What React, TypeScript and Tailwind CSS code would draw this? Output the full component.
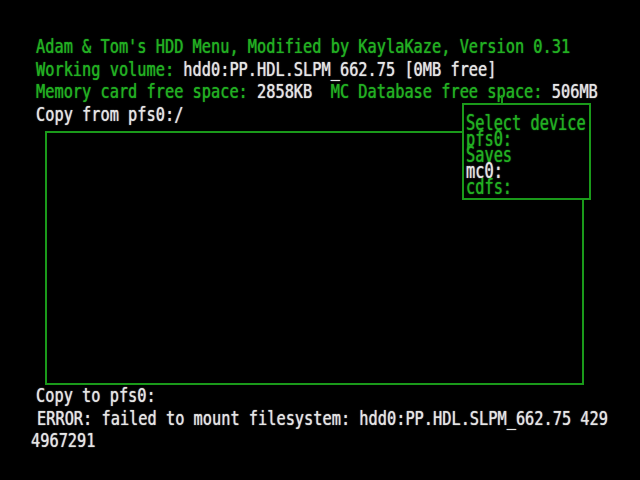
import React from "react";

const G = "text-[#22b022] [text-shadow:0_0_1px_#22b022]";
const W = "text-[#e6e6e6] [text-shadow:0_0_1px_#cfcfcf]";

function Line({ children, className = "" }: { children: React.ReactNode; className?: string }) {
  return (
    <div className={`h-[22.5px] leading-[22.5px] whitespace-pre ${className}`}>
      <span className="inline-block scale-y-[1.25] origin-center">{children}</span>
    </div>
  );
}

function MenuLine({ children, className = "" }: { children: React.ReactNode; className?: string }) {
  return (
    <div className={`h-[16px] leading-[16px] whitespace-pre ${className}`}>
      <span className="inline-block scale-y-[1.4] origin-center">{children}</span>
    </div>
  );
}

export default function App() {
  return (
    <div
      className="relative w-[640px] h-[480px] bg-black overflow-hidden text-[15.3px] [font-family:'DejaVu_Sans_Mono',monospace]"
    >
      <div className="pt-[36px] pl-[36px]">
        <Line className={G}>Adam &amp; Tom's HDD Menu, Modified by KaylaKaze, Version 0.31</Line>
        <Line>
          <span className={G}>Working volume: </span>
          <span className={W}>hdd0:PP.HDL.SLPM_662.75 [0MB free]</span>
        </Line>
        <Line>
          <span className={G}>Memory card free space: </span>
          <span className={W}>2858KB</span>
          <span className={G}>  MC Database free space: </span>
          <span className={W}>506MB</span>
        </Line>
        <Line className={W}>Copy from pfs0:/</Line>
      </div>

      <div className="mt-[5px] ml-[45px] w-[539px] h-[254px] border-2 border-[#1a9a1a]" />

      <div className="pl-[36px]">
        <Line className={W}>Copy to pfs0:</Line>
        <Line className={`${W} ml-[1px]`}>ERROR: failed to mount filesystem: hdd0:PP.HDL.SLPM_662.75 429</Line>
        <Line className={`${W} -ml-[5px]`}>4967291</Line>
      </div>

      {/* small tick above the device menu */}
      <div className="absolute left-[501px] top-[95px] w-[2px] h-[9px] bg-[#1a9a1a]" />

      {/* Select device popup */}
      <div className="absolute left-[462px] top-[103px] w-[129px] h-[97px] bg-black border-2 border-[#1a9a1a] pt-[10px] pl-[2px]">
        <MenuLine className={G}>Select device</MenuLine>
        <MenuLine className={G}>pfs0:</MenuLine>
        <MenuLine className={G}>Saves</MenuLine>
        <MenuLine className={W}>mc0:</MenuLine>
        <MenuLine className={G}>cdfs:</MenuLine>
      </div>
    </div>
  );
}
